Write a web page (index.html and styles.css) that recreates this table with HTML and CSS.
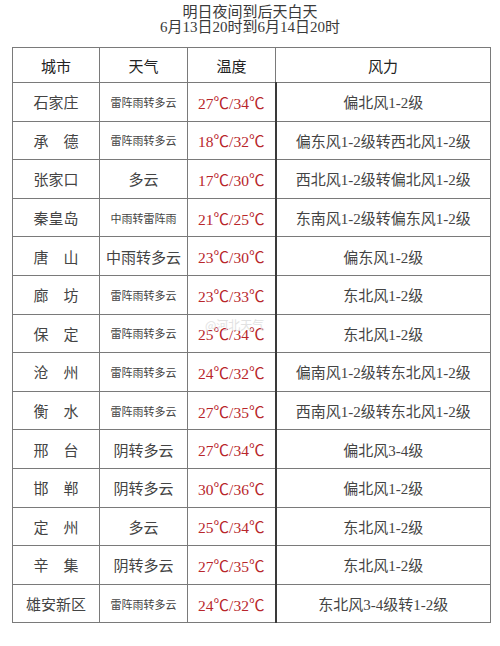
FILE: index.html
```html
<!DOCTYPE html>
<html lang="zh">
<head>
<meta charset="utf-8">
<link rel="stylesheet" href="styles.css">
</head>
<body>
<div class="page">
  <div class="title">
    <div>明日夜间到后天白天</div>
    <div>6月13日20时到6月14日20时</div>
  </div>
  <table class="tbl">
    <colgroup>
      <col class="c1"><col class="c2"><col class="c3"><col class="c4">
    </colgroup>
    <thead>
      <tr><th>城市</th><th>天气</th><th>温度</th><th>风力</th></tr>
    </thead>
    <tbody>
      <tr><td>石家庄</td><td class="sm">雷阵雨转多云</td><td class="t">27℃/34℃</td><td>偏北风1-2级</td></tr>
      <tr><td>承　德</td><td class="sm">雷阵雨转多云</td><td class="t">18℃/32℃</td><td>偏东风1-2级转西北风1-2级</td></tr>
      <tr><td>张家口</td><td>多云</td><td class="t">17℃/30℃</td><td>西北风1-2级转偏北风1-2级</td></tr>
      <tr><td>秦皇岛</td><td class="sm">中雨转雷阵雨</td><td class="t">21℃/25℃</td><td>东南风1-2级转偏东风1-2级</td></tr>
      <tr><td>唐　山</td><td>中雨转多云</td><td class="t">23℃/30℃</td><td>偏东风1-2级</td></tr>
      <tr><td>廊　坊</td><td class="sm">雷阵雨转多云</td><td class="t">23℃/33℃</td><td>东北风1-2级</td></tr>
      <tr><td>保　定</td><td class="sm">雷阵雨转多云</td><td class="t">25℃/34℃</td><td>东北风1-2级</td></tr>
      <tr><td>沧　州</td><td class="sm">雷阵雨转多云</td><td class="t">24℃/32℃</td><td>偏南风1-2级转东北风1-2级</td></tr>
      <tr><td>衡　水</td><td class="sm">雷阵雨转多云</td><td class="t">27℃/35℃</td><td>西南风1-2级转东北风1-2级</td></tr>
      <tr><td>邢　台</td><td>阴转多云</td><td class="t">27℃/34℃</td><td>偏北风3-4级</td></tr>
      <tr><td>邯　郸</td><td>阴转多云</td><td class="t">30℃/36℃</td><td>偏北风1-2级</td></tr>
      <tr><td>定　州</td><td>多云</td><td class="t">25℃/34℃</td><td>东北风1-2级</td></tr>
      <tr><td>辛　集</td><td>阴转多云</td><td class="t">27℃/35℃</td><td>东北风1-2级</td></tr>
      <tr><td>雄安新区</td><td class="sm">雷阵雨转多云</td><td class="t">24℃/32℃</td><td>东北风3-4级转1-2级</td></tr>
    </tbody>
  </table>
  <div class="wm">@河北天气</div>
</div>
</body>
</html>
```
FILE: styles.css
```css
html, body {
  margin: 0;
  padding: 0;
  background: #ffffff;
}
.page {
  position: relative;
  width: 500px;
  height: 646px;
  font-family: "Liberation Serif", "Noto Sans CJK SC", serif;
  color: #444;
}
.title {
  padding-top: 5px;
  text-align: center;
  font-size: 15px;
  line-height: 15px;
  color: #3a3a3a;
}
.tbl {
  margin: 12px 0 0 12px;
  width: 478px;
  border-collapse: collapse;
  table-layout: fixed;
}
.c1 { width: 87px; }
.c2 { width: 88px; }
.c3 { width: 88px; }
.c4 { width: 215px; }
.tbl th, .tbl td {
  border: 1px solid #7a7a7a;
  text-align: center;
  padding: 0;
  white-space: nowrap;
}
.tbl td:nth-child(3) {
  border-right: 2px solid #3a3a3a;
}
.tbl th {
  height: 34px;
  font-size: 15px;
  font-weight: normal;
  color: #222;
}
.tbl td {
  height: 37.6px;
  font-size: 15px;
}
.tbl td.sm {
  font-size: 11px;
}
.tbl td.t {
  color: #b8262b;
  font-size: 15.5px;
}
.wm {
  position: absolute;
  left: 205px;
  top: 316px;
  font-size: 12px;
  color: #e2e2e2;
  font-family: "Noto Sans CJK SC", sans-serif;
}
```
